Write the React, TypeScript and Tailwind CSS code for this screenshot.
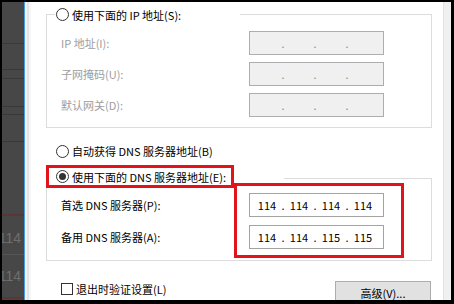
import { Fragment } from "react";
import clsx from "clsx";

function Radio({ checked }: { checked?: boolean }) {
  return (
    <span className="flex h-[13px] w-[13px] shrink-0 items-center justify-center rounded-full border border-[#333] bg-white">
      {checked && <span className="h-[7px] w-[7px] rounded-full bg-[#333]" />}
    </span>
  );
}

function IpBox({ parts, disabled }: { parts?: string[]; disabled?: boolean }) {
  const octets = parts ?? ["", "", "", ""];
  return (
    <div
      className={clsx(
        "flex h-[24px] w-[135px] items-center border pl-[3px]",
        disabled ? "border-[#adadad] bg-[#f0f0f0] text-[#8a8a8a]" : "border-[#a3a3a3] bg-white text-black"
      )}
    >
      {octets.map((o, i) => (
        <Fragment key={i}>
          {i > 0 && <span className="w-[4px] text-center">.</span>}
          <span className="w-[28px] text-center">{o}</span>
        </Fragment>
      ))}
    </div>
  );
}

// background window peeking out on the left
function LeftStrip() {
  return (
    <div className="flex w-[22px] flex-col bg-[#474747] font-['Liberation_Sans',sans-serif] text-[14px] text-[#6e6e6e]">
      <div className="h-[42px] border-b border-[#3a3a3a]" />
      <div className="h-[26px] border-b border-[#3a3a3a]" />
      <div className="h-[9px] border-b border-[#3a3a3a]" />
      <div className="h-[28px] border-b border-[#3a3a3a]" />
      <div className="h-[8px] border-b border-[#3a3a3a]" />
      <div className="h-[27px] border-b border-[#3a3a3a]" />
      <div className="h-[74px] border-b-2 border-[#5b3636]" />
      <div className="flex h-[39px] justify-end overflow-hidden border-b border-[#555] pt-[14px] pr-[3px] leading-[16px]">114</div>
      <div className="flex h-[44px] justify-end overflow-hidden border-b-2 border-[#5b3636] pt-[13px] pr-[3px] leading-[16px]">114</div>
    </div>
  );
}

export default function App() {
  return (
    <div className="h-[304px] w-[454px] overflow-hidden bg-black pt-[2px] pr-[3px] pb-[4px] pl-[2px]">
      <div className="flex h-full font-['Noto_Sans_CJK_SC',sans-serif] text-[11px] leading-[16px] text-black">
        <LeftStrip />
        <div className="w-[1px] bg-[#4a9be2]" />
        <div className="flex w-[6px]">
          <div className="w-[2px] bg-[#f2f2f2]" />
          <div className="w-[2px] bg-[#e4e4e4]" />
          <div className="w-[2px] bg-[#f7f7f7]" />
        </div>

        {/* dialog body */}
        <div className="w-[412px] overflow-hidden bg-white pr-[11px] pl-[15px]">
          {/* IP group */}
          <div className="mt-[12px] border border-[#dcdcdc] pb-[10px]">
            <div className="-mt-[9px] ml-[8px] flex h-[17px] w-[185px] items-center gap-[3px] bg-white pl-[1px]">
              <Radio />
              <span>使用下面的 IP 地址(S):</span>
            </div>
            <div className="mt-[8px] flex flex-col gap-[7px] text-[#9d9d9d]">
              <div className="flex h-[24px] items-center">
                <span className="w-[202px] pl-[14px]">IP 地址(I):</span>
                <IpBox disabled />
              </div>
              <div className="flex h-[24px] items-center">
                <span className="w-[202px] pl-[14px]">子网掩码(U):</span>
                <IpBox disabled />
              </div>
              <div className="flex h-[24px] items-center">
                <span className="w-[202px] pl-[14px]">默认网关(D):</span>
                <IpBox disabled />
              </div>
            </div>
          </div>

          <div className="mt-[15px] ml-[10px] flex h-[16px] items-center gap-[3px]">
            <Radio />
            <span>自动获得 DNS 服务器地址(B)</span>
          </div>

          {/* DNS group */}
          <div className="relative mt-[19px] border border-[#dcdcdc] pb-[11px]">
            <div className="-mt-[14px] -ml-px h-[23px] w-[238px] bg-white">
              <div className="flex h-full w-[188px] items-center gap-[3px] border-[3px] border-[#e3131b] pl-[7px]">
                <Radio checked />
                <span className="whitespace-nowrap">使用下面的 DNS 服务器地址(E):</span>
              </div>
            </div>
            <div className="mt-[5px] flex flex-col gap-[8px]">
              <div className="flex h-[24px] items-center">
                <span className="w-[202px] pl-[14px]">首选 DNS 服务器(P):</span>
                <IpBox parts={["114", "114", "114", "114"]} />
              </div>
              <div className="flex h-[24px] items-center">
                <span className="w-[202px] pl-[14px]">备用 DNS 服务器(A):</span>
                <IpBox parts={["114", "114", "115", "115"]} />
              </div>
            </div>
            {/* annotation */}
            <div className="absolute top-[4px] left-[187px] h-[75px] w-[170px] border-[3px] border-[#e3131b]" />
          </div>

          <div className="mt-[20px] mr-[1px] flex items-start justify-between pl-[15px]">
            <div className="flex h-[16px] items-center gap-[3px]">
              <span className="h-[12px] w-[12px] border border-[#333] bg-white" />
              <span>退出时验证设置(L)</span>
            </div>
            <button className="flex h-[23px] w-[96px] items-center justify-center border border-[#adadad] bg-[#e1e1e1]">
              高级(V)...
            </button>
          </div>
        </div>

        <div className="w-[8px] border-l border-[#e3e3e3] bg-[#f0f0f0]" />
      </div>
    </div>
  );
}
